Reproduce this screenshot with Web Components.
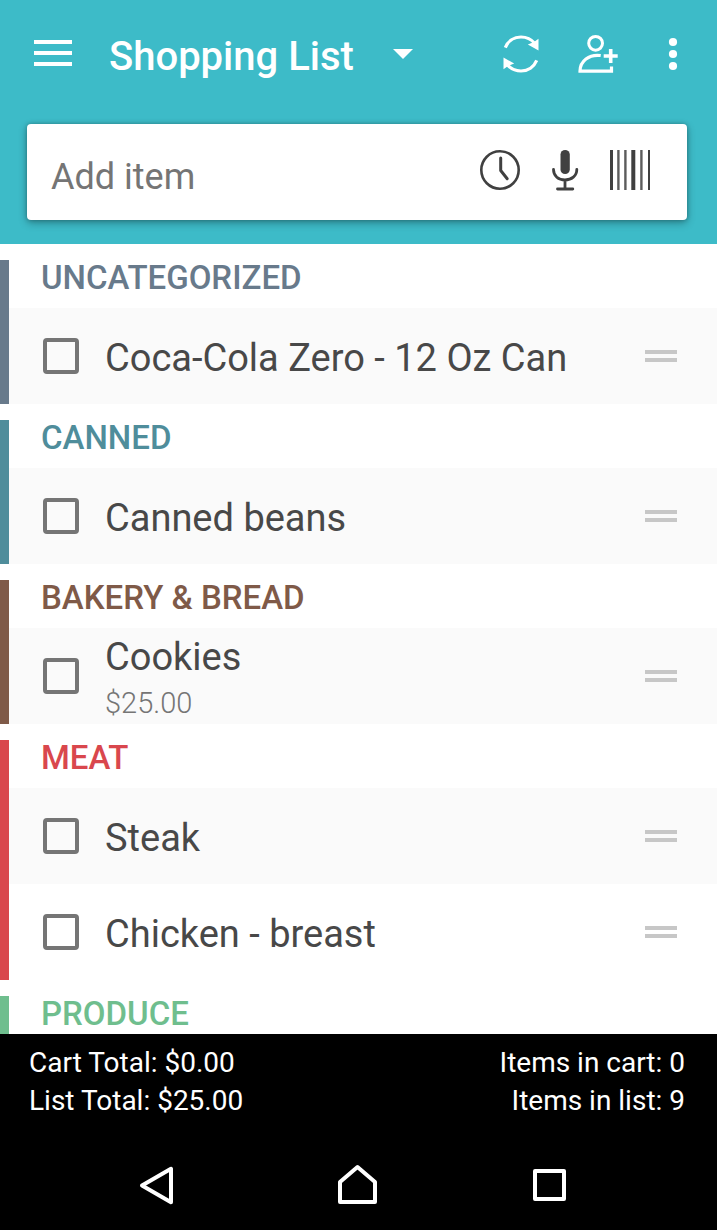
<!DOCTYPE html>
<html lang="en">
<head>
<meta charset="utf-8">
<meta name="viewport" content="width=device-width, initial-scale=1">
<title>Shopping List</title>
<style>
  body { margin: 0; font-family: Roboto, sans-serif; background: #fff; }
</style>
</head>
<body>
<shopping-app>
  <list-header slot="header" heading="Shopping List"></list-header>
  <list-category name="Uncategorized" style="--accent:#687a8b">
    <list-item>Coca-Cola Zero - 12 Oz Can</list-item>
  </list-category>
  <list-category name="Canned" style="--accent:#4f8d9b">
    <list-item>Canned beans</list-item>
  </list-category>
  <list-category name="Bakery &amp; Bread" style="--accent:#7f5a48">
    <list-item>Cookies<span slot="price">$25.00</span></list-item>
  </list-category>
  <list-category name="Meat" style="--accent:#d9474d">
    <list-item>Steak</list-item>
    <list-item>Chicken - breast</list-item>
  </list-category>
  <list-category name="Produce" style="--accent:#6fbe8e"></list-category>
  <list-totals slot="footer">
    <span>Cart Total: $0.00</span>
    <span>Items in cart: 0</span>
    <span>List Total: $25.00</span>
    <span>Items in list: 9</span>
  </list-totals>
  <system-nav slot="footer"></system-nav>
</shopping-app>

<script>
const ICONS = {
  menu: ['0 0 40 40', '<path d="M1 8h38M1 19h38M1 30h38" stroke-width="4"/>'],
  caret: ['0 0 20 10', '<path d="M0 0h20L10 10z" fill="currentColor" stroke="none"/>'],
  sync: ['0 0 40 40', '<g id="a"><path d="M4.3 13.6C7 7.2 13 3 20 3C26 3 30.5 5.5 34 9.5" stroke-width="3.2"/><path d="M37.5 4.7V16.5L26.8 10.5L33 8z" fill="currentColor" stroke="none"/></g><use href="#a" transform="rotate(180 20 20)"/>'],
  addUser: ['0 0 40 40', '<circle cx="18.6" cy="9.3" r="6.9" stroke-width="3"/><path d="M23.7 21.5C12 20 3 27 3 37.2H34.5V32.5" stroke-width="3.2"/><path d="M33.7 15v14M26.7 22h14" stroke-width="3.6"/>'],
  more: ['0 0 40 40', '<g fill="currentColor" stroke="none"><circle cx="20" cy="8" r="4.1"/><circle cx="20" cy="20" r="4.1"/><circle cx="20" cy="32" r="4.1"/></g>'],
  clock: ['0 0 40 40', '<circle cx="20" cy="20" r="18.7" stroke-width="2.6"/><path d="M20.7 8V20.5L27.2 28.7" stroke-width="3" stroke-linecap="round" stroke-linejoin="round"/>'],
  mic: ['0 0 40 40', '<rect x="15.5" y="0" width="9.3" height="24" rx="4.6" fill="currentColor" stroke="none"/><path d="M8.5 19.5C8.5 26 13.5 30 20 30S31.8 26 31.8 19.5M20 30V38.5M12.5 39H27.8" stroke-width="2.8" stroke-linecap="round"/>'],
  barcode: ['0 0 40 40', '<g fill="currentColor" stroke="none"><path d="M0 0h3v40H0zM21.3 0h4v40h-4zM38 0h2v40h-2z"/><path d="M7.2 0h2.4v40H7.2zM14.2 0h2.4v40h-2.4zM30.2 0h2.4v40h-2.4z" opacity=".85"/></g>'],
  back: ['0 0 60 60', '<path d="M6 30.5L35 13.8V47.2z" stroke-width="4" stroke-linejoin="round"/>'],
  home: ['0 0 60 60', '<path d="M12 47V27L29.5 12L47 27V47z" stroke-width="4" stroke-linejoin="round"/>'],
  recents: ['0 0 60 60', '<rect x="15" y="16" width="29" height="28" stroke-width="4" stroke-linejoin="round"/>']
};

const RESET = `
  *, *::before, *::after { box-sizing: border-box; }
  button { display: flex; align-items: center; margin: 0; padding: 0; border: 0; background: none; color: inherit; font: inherit; cursor: pointer; }
`;

class Base extends HTMLElement {
  render(html) {
    this.attachShadow({ mode: 'open' }).innerHTML = `<style>${RESET}</style>${html}`;
  }
}

customElements.define('app-icon', class extends Base {
  connectedCallback() {
    if (this.shadowRoot) return;
    const [box, art] = ICONS[this.getAttribute('name')];
    const [, , w, h] = box.split(' ');
    this.render(`<style>:host { display: block; flex: none; } svg { display: block; overflow: visible; }</style>
      <svg width="${w}" height="${h}" viewBox="${box}" fill="none" stroke="currentColor" aria-hidden="true">${art}</svg>`);
  }
});

customElements.define('add-item-bar', class extends Base {
  connectedCallback() {
    if (this.shadowRoot) return;
    this.render(`<style>
      :host { display: block; }
      form { display: flex; height: 96px; padding: 0 37px 0 24px; border-radius: 4px; background: #fff; color: #404040;
        box-shadow: 0 3px 8px rgba(0,0,0,.3), 0 0 4px rgba(0,0,0,.25); }
      input { flex: 1; min-width: 0; padding: 10px 0 0; border: 0; outline: 0; background: none; color: inherit; font: inherit; font-size: 36px; }
      input::placeholder { color: #757575; opacity: 1; }
      .tools { display: flex; align-items: center; gap: 25px; padding-bottom: 4px; }
    </style>
    <form>
      <input type="text" placeholder="Add item" aria-label="Add item">
      <div class="tools">
        <button type="button" aria-label="Recent items"><app-icon name="clock"></app-icon></button>
        <button type="button" aria-label="Voice input"><app-icon name="mic"></app-icon></button>
        <button type="button" aria-label="Scan barcode"><app-icon name="barcode"></app-icon></button>
      </div>
    </form>`);
  }
});

customElements.define('list-header', class extends Base {
  connectedCallback() {
    if (this.shadowRoot) return;
    this.render(`<style>
      :host { display: block; padding-bottom: 24px; background: #3dbbc8; color: #fff; }
      .bar { display: flex; align-items: center; gap: 36px; height: 108px; padding: 0 24px 0 33px; }
      h1 { flex: 1; margin: 0; font-size: 40px; font-weight: 500; line-height: 44px; white-space: nowrap; }
      h1 button { gap: 39px; }
      h1 span { padding-top: 6px; }
      add-item-bar { margin: 16px 30px 0 27px; }
    </style>
    <div class="bar">
      <button aria-label="Menu"><app-icon name="menu"></app-icon></button>
      <h1><button><span>${this.getAttribute('heading')}</span><app-icon name="caret"></app-icon></button></h1>
      <button aria-label="Sync"><app-icon name="sync"></app-icon></button>
      <button aria-label="Share list"><app-icon name="addUser"></app-icon></button>
      <button aria-label="More options"><app-icon name="more"></app-icon></button>
    </div>
    <add-item-bar></add-item-bar>`);
  }
});

customElements.define('list-category', class extends Base {
  connectedCallback() {
    if (this.shadowRoot) return;
    this.render(`<style>
      :host { display: block; margin-top: 16px; border-left: 9px solid var(--accent); }
      h2 { height: 48px; margin: 0; padding-left: 32px; color: var(--accent); font-size: 33px; font-weight: 500; line-height: 36px; text-transform: uppercase; }
      ::slotted(list-item:nth-child(odd)) { background: #fafafa; }
    </style>
    <section><h2></h2><slot></slot></section>`);
    this.shadowRoot.querySelector('h2').textContent = this.getAttribute('name');
  }
});

customElements.define('list-item', class extends Base {
  connectedCallback() {
    if (this.shadowRoot) return;
    this.render(`<style>
      :host { display: flex; align-items: center; height: 96px; padding: 0 40px 0 34px; color: #484848; }
      label { display: flex; flex: 1; align-items: center; gap: 26px; min-width: 0; }
      input { appearance: none; flex: none; width: 36px; height: 36px; margin: 0; border: 4px solid #757575; border-radius: 4px; }
      input:checked { background: #757575; }
      .text { padding-top: 4px; font-size: 38px; line-height: 50px; }
      ::slotted([slot=price]) { display: block; color: #757575; font-size: 29px; font-weight: 300; line-height: 42px; }
      .grip { width: 32px; height: 12px; border: solid #c7c7c7; border-width: 4px 0; cursor: grab; }
    </style>
    <label><input type="checkbox"><span class="text"><slot></slot><slot name="price"></slot></span></label>
    <button class="grip" aria-label="Reorder"></button>`);
  }
});

customElements.define('list-totals', class extends Base {
  connectedCallback() {
    if (this.shadowRoot) return;
    this.render(`<style>
      :host { display: grid; grid-template-columns: auto auto; justify-content: space-between; padding: 10px 32px 20px 29px; background: #000; color: #fff; font-size: 28px; line-height: 38px; }
      ::slotted(:nth-child(even)) { text-align: right; }
    </style><slot></slot>`);
  }
});

customElements.define('system-nav', class extends Base {
  connectedCallback() {
    if (this.shadowRoot) return;
    this.render(`<style>
      :host { display: block; background: #000; color: #fff; }
      nav { display: grid; grid-template-columns: repeat(3, 1fr); padding: 15px 71px 15px 70px; }
      button { justify-content: center; }
    </style>
    <nav aria-label="System">
      <button aria-label="Back"><app-icon name="back"></app-icon></button>
      <button aria-label="Home"><app-icon name="home"></app-icon></button>
      <button aria-label="Recent apps"><app-icon name="recents"></app-icon></button>
    </nav>`);
  }
});

customElements.define('shopping-app', class extends Base {
  connectedCallback() {
    if (this.shadowRoot) return;
    this.render(`<style>
      :host { display: flex; flex-direction: column; height: 100vh; }
      main { flex: 1; min-height: 0; overflow-y: auto; scrollbar-width: none; }
    </style>
    <slot name="header"></slot>
    <main><slot></slot></main>
    <slot name="footer"></slot>`);
  }
});
</script>
</body>
</html>
